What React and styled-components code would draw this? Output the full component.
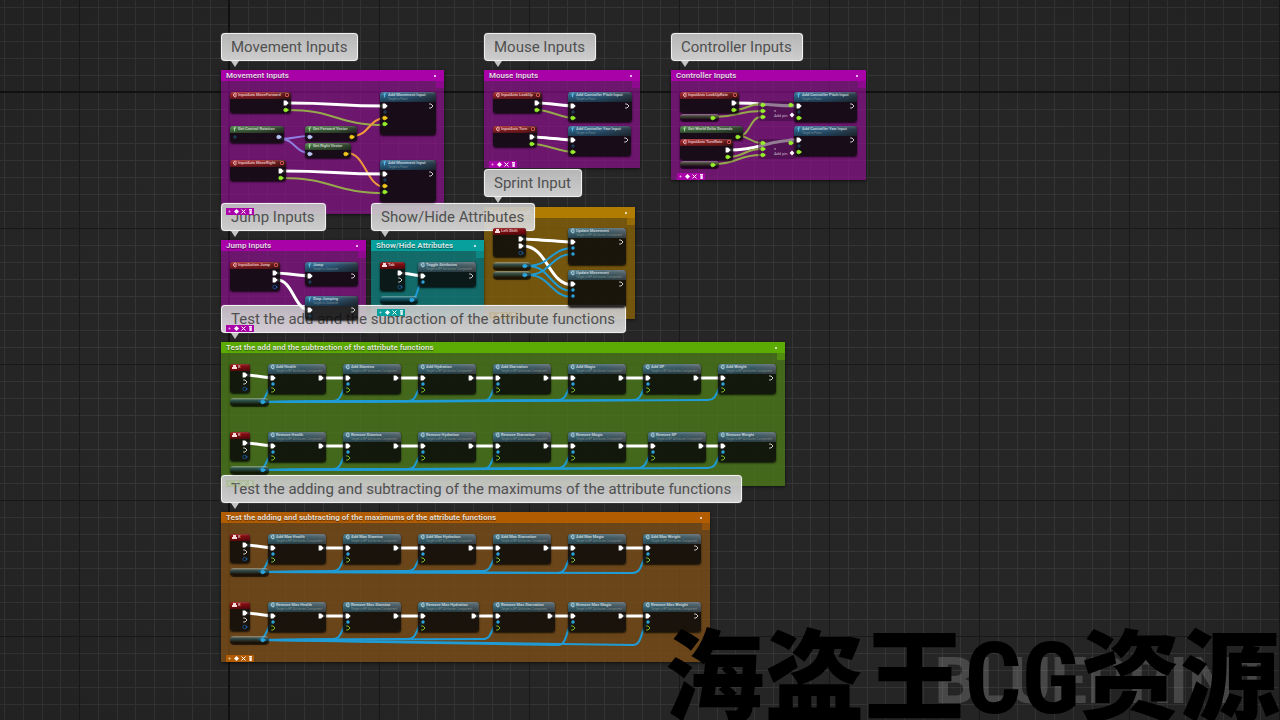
import React from 'react';
import styled, { createGlobalStyle, css } from 'styled-components';

const GlobalStyle = createGlobalStyle`
  *, *::before, *::after {
    box-sizing: border-box;
  }
  body {
    margin: 0;
    background: #232323;
    font-family: Roboto, 'Noto Sans CJK SC', sans-serif;
  }
`;

// eight cells per major grid step, snapped to whole pixels
const gridLines = (size, color) => {
  const stops = [];
  let last = 0;
  for (let i = 1; i < 8; i += 1) {
    const at = Math.round((size * i) / 8);
    stops.push(`transparent ${last}px ${at}px`, `${color} ${at}px ${at + 1}px`);
    last = at + 1;
  }
  return `${stops.join(', ')}, transparent ${last}px`;
};

const Canvas = styled.main`
  position: relative;
  min-height: 100vh;
  overflow: hidden;
  background-color: #262626;
  background-image:
    radial-gradient(ellipse at center, transparent 60%, rgba(0, 0, 0, 0.12) 100%),
    linear-gradient(90deg, #121212 2px, transparent 2px),
    linear-gradient(#121212 2px, transparent 2px),
    linear-gradient(90deg, #191919 1px, transparent 1px),
    linear-gradient(#191919 1px, transparent 1px),
    linear-gradient(90deg, ${gridLines(150, '#353535')}),
    linear-gradient(${gridLines(136, '#353535')});
  background-size: 100% 100%, 3000px 100%, 100% 3000px, 150px 100%, 100% 136px, 150px 100%, 100% 136px;
  background-position: 0 0, 228px 0, 0 91px, 229px 0, 0 92px, 229px 0, 0 92px;
`;

const place = css`
  position: absolute;
  left: ${p => p.$x}px;
  top: ${p => p.$y}px;
  width: ${p => p.$w}px;
  height: ${p => p.$h}px;
`;

const themes = {
  purple: { head: '#a902a9', body: 'rgba(144, 14, 146, 0.66)' },
  teal: { head: '#08a09c', body: 'rgba(12, 128, 126, 0.76)' },
  amber: { head: '#b07d02', body: 'rgba(140, 100, 6, 0.76)' },
  green: { head: '#5cab04', body: 'rgba(76, 124, 24, 0.76)' },
  orange: { head: '#b25c02', body: 'rgba(126, 78, 22, 0.78)' },
};

const CommentBox = styled.section`
  ${place}
  background: ${p => themes[p.$tone].body};
  box-shadow: 0 1px 3px rgba(0, 0, 0, 0.6);
`;

const CommentHead = styled.header`
  display: flex;
  align-items: center;
  justify-content: space-between;
  height: 11px;
  padding: 0 5px;
  background: ${p => themes[p.$tone].head};
`;

const CommentTitle = styled.h2`
  margin: 0;
  color: rgba(255, 255, 255, 0.82);
  font-size: 8px;
  font-weight: 700;
  line-height: 11px;
  white-space: nowrap;
  text-shadow: 0 1px 1px rgba(0, 0, 0, 0.5);
`;

const HeadDot = styled.span`
  width: 2px;
  height: 2px;
  margin-right: 3px;
  background: rgba(255, 255, 255, 0.7);
`;

const CornerTab = styled.div`
  width: 8px;
  height: 7px;
  margin-left: auto;
  background: ${p => themes[p.$tone].head};
  opacity: 0.55;
`;

const Bubble = styled.div`
  position: absolute;
  left: ${p => p.$x}px;
  top: ${p => p.$y}px;
  height: 28px;
  padding: 0 10px 0 9px;
  border: 1px solid rgba(244, 244, 244, 0.92);
  border-radius: 4px;
  background: linear-gradient(rgba(198, 198, 198, 0.9), rgba(224, 224, 224, 0.9));
  box-shadow: 0 0 1px rgba(240, 240, 240, 0.8);
  color: #505050;
  font-size: 15px;
  line-height: 26px;
  white-space: nowrap;

  &::after {
    content: '';
    position: absolute;
    top: 27px;
    left: 9px;
    border: 4px solid transparent;
    border-top: 6px solid #c4c4c4;
    border-bottom: 0;
  }
`;

const headColors = {
  event: 'linear-gradient(90deg, #a0242c, #8e2024 70%, #481a1a)',
  key: 'linear-gradient(90deg, #941010, #7c0c14)',
  func: 'linear-gradient(90deg, #30688e, #2e5a7c 50%, #2a3844)',
  blue: 'linear-gradient(90deg, #42707f, #3e5f6a 60%, #56636a)',
  pure: 'linear-gradient(90deg, #4e7a4b, #42603e 60%, #2e3c2c)',
};

const NodeBox = styled.article`
  ${place}
  overflow: hidden;
  border-radius: 3px;
  background: rgba(10, 10, 10, 0.85);
  box-shadow: 0 1px 2px rgba(0, 0, 0, 0.8);
`;

const NodeHead = styled.div`
  display: flex;
  gap: 1px;
  height: ${p => (p.$tall ? 10 : 7)}px;
  padding: 0 2px;
  background: linear-gradient(rgba(255, 255, 255, 0.18), transparent 30%, rgba(0, 0, 0, 0.4)), ${p => headColors[p.$kind]};
`;

const HeadText = styled.div`
  flex: 1;
  min-width: 0;
  overflow: hidden;
  color: rgba(255, 255, 255, 0.68);
  font-size: 4px;
  font-weight: 700;
  line-height: 6px;
  white-space: nowrap;
`;

const SubText = styled.div`
  color: rgba(190, 200, 190, 0.5);
  font-size: 3px;
  font-weight: 400;
  line-height: 3px;
`;

const Badge = styled.span`
  align-self: flex-start;
  width: 4px;
  height: 4px;
  margin-top: 1px;
  border: 1px solid #d35353;
  border-radius: 1px;
`;

const PinRows = styled.div`
  display: flex;
  justify-content: space-between;
  padding: ${p => (p.$event ? 0 : 1)}px 2px 0;
`;

const PinColumn = styled.div`
  display: grid;
  grid-auto-rows: ${p => (p.$event ? 7 : 6)}px;
  align-items: center;

  svg {
    display: block;
  }
`;

const Pill = styled.div`
  ${place}
  display: flex;
  align-items: center;
  justify-content: flex-end;
  padding-right: 3px;
  border-radius: 4px;
  background: linear-gradient(rgba(255, 255, 255, 0.4), ${p => p.$tint} 30%, rgba(0, 0, 0, 0.75) 80%);
  box-shadow: 0 1px 1px rgba(0, 0, 0, 0.7);
`;

const MathBox = styled.div`
  ${place}
  border-radius: 3px;
  background: rgba(60, 16, 62, 0.55);
`;

const MathText = styled.div`
  position: absolute;
  left: 16px;
  top: 7px;
  color: rgba(255, 255, 255, 0.7);
  font-size: 4px;
  line-height: 5px;
  white-space: nowrap;
`;

const AddPin = styled.svg`
  position: absolute;
  right: 1px;
  top: 11px;
`;

const Layer = styled.svg`
  position: absolute;
  inset: 0;
  width: 100%;
  height: 100%;
  pointer-events: none;
`;

const Tools = styled.div`
  position: absolute;
  left: ${p => p.$x}px;
  top: ${p => p.$y}px;
  display: flex;
  background: ${p => themes[p.$tone].head};
  opacity: ${p => (p.$faint ? 0.15 : 1)};
`;

const ToolButton = styled.button`
  width: 7px;
  height: 7px;
  padding: 0;
  border: 0;
  background: none;

  svg {
    display: block;
  }
`;

const Brand = styled.div`
  position: absolute;
  right: 8px;
  bottom: -2px;
  color: rgba(255, 255, 255, 0.16);
  font-size: 64px;
  font-weight: 700;
  line-height: 80px;
`;

const Overlay = styled.div`
  position: absolute;
  right: 0;
  bottom: -9px;
  display: flex;
  align-items: baseline;
  color: #000;
  font-family: 'Noto Sans CJK SC', sans-serif;
  font-size: 100px;
  font-weight: 900;
  line-height: 100px;
  white-space: nowrap;
`;

const OverlayLatin = styled.span`
  font-family: 'Liberation Sans Narrow', 'Roboto Condensed', 'Noto Sans CJK SC', sans-serif;
  font-weight: 700;
`;

const pinColors = {
  w: '#fff',
  g: '#97ee2c',
  y: '#f2c81c',
  b: '#2ba4dc',
  n: '#1b5a9c',
  d: '#1d3d55',
  l: '#b9c4f4',
};

// first letter is the color, a trailing "o" leaves the pin unfilled
const Pin = ({ type }) => {
  const color = pinColors[type[0]];
  const hollow = type[1] === 'o';
  if (type[0] === 'w' || type === 'go') {
    return (
      <svg width="6" height="6" viewBox="0 0 6 6">
        <path
          d={hollow ? 'M1.2 1H3L5 3L3 5H1.2' : 'M0.6 0.4H3.2L5.7 3L3.2 5.6H0.6Z'}
          fill={hollow ? 'none' : color}
          stroke={hollow ? color : 'none'}
          strokeWidth="0.8"
        />
      </svg>
    );
  }
  if (type === 'b' || type === 'd') {
    return (
      <svg width="6" height="6" viewBox="0 0 6 6">
        <circle cx="3" cy="3" r="1.7" fill={color} />
      </svg>
    );
  }
  return (
    <svg width="6" height="6" viewBox="0 0 6 6">
      <circle cx="2.6" cy="3" r="1.8" fill={hollow ? 'none' : color} stroke={color} strokeWidth="0.8" />
      <path d="M4 1.4L6 3L4 4.6Z" fill={color} />
    </svg>
  );
};

const HeadIcon = ({ kind }) => (
  <svg width="5" height="6" viewBox="0 0 5 6">
    {kind === 'key' && <path d="M1 1h3v2h1v2H0V3h1Z" fill="#f4dada" />}
    {kind === 'event' && <path d="M4.4 1.4A1.9 1.9 0 1 0 4.4 4.6M2.5 3H5" fill="none" stroke="#f4c9c9" strokeWidth="0.9" />}
    {kind === 'blue' && <path d="M4.2 1.4A1.9 1.9 0 1 0 4.4 4.3M2.5 3H4.8" fill="none" stroke="#c7e6f4" strokeWidth="0.9" />}
    {(kind === 'func' || kind === 'pure') && (
      <path d="M3.8 1Q2.6 0.6 2.5 2V5.4M1.4 2.7H3.6" fill="none" stroke={kind === 'pure' ? '#a3e59b' : '#5cc4f4'} strokeWidth="0.9" />
    )}
  </svg>
);

const Node = ({ kind, x, y, w, h, title, sub, ins = [], outs = [] }) => {
  const tall = kind === 'func' || kind === 'blue';
  return (
    <NodeBox $x={x} $y={y} $w={w} $h={h}>
      <NodeHead $kind={kind} $tall={tall}>
        <HeadIcon kind={kind} />
        <HeadText>
          {title}
          {sub && <SubText>{sub}</SubText>}
        </HeadText>
        {kind === 'event' && <Badge />}
      </NodeHead>
      <PinRows $event={!tall}>
        <PinColumn $event={!tall}>{ins.map((t, i) => <Pin key={i} type={t} />)}</PinColumn>
        <PinColumn $event={!tall}>{outs.map((t, i) => <Pin key={i} type={t} />)}</PinColumn>
      </PinRows>
    </NodeBox>
  );
};

const wireColors = { w: '#fff', g: '#96a84c', b: '#1f9cd6', y: '#f09a3c', l: '#8f7fe0' };

const Wire = ({ c = 'w', p, bend = 0.5 }) => {
  const [x1, y1, x2, y2] = p;
  const dx = Math.abs(x2 - x1) * bend;
  return (
    <path
      d={`M${x1} ${y1}C${x1 + dx} ${y1} ${x2 - dx} ${y2} ${x2} ${y2}`}
      fill="none"
      stroke={wireColors[c]}
      strokeWidth={c === 'w' ? 3 : 2}
    />
  );
};

const comments = [
  { tone: 'purple', x: 221, y: 70, w: 223, h: 144, title: 'Movement Inputs' },
  { tone: 'purple', x: 484, y: 70, w: 156, h: 98, title: 'Mouse Inputs' },
  { tone: 'purple', x: 671, y: 70, w: 195, h: 110, title: 'Controller Inputs' },
  { tone: 'amber', x: 484, y: 207, w: 151, h: 112, title: 'Sprint Input' },
  { tone: 'purple', x: 221, y: 240, w: 145, h: 92, title: 'Jump Inputs' },
  { tone: 'teal', x: 371, y: 240, w: 113, h: 77, title: 'Show/Hide Attributes' },
  { tone: 'green', x: 221, y: 342, w: 564, h: 144, title: 'Test the add and the subtraction of the attribute functions' },
  { tone: 'orange', x: 221, y: 512, w: 489, h: 150, title: 'Test the adding and subtracting of the maximums of the attribute functions' },
];

const bubbles = [
  [221, 33, 'Movement Inputs'],
  [484, 33, 'Mouse Inputs'],
  [671, 33, 'Controller Inputs'],
  [484, 169, 'Sprint Input'],
  [221, 203, 'Jump Inputs'],
  [371, 203, 'Show/Hide Attributes'],
  [221, 305, 'Test the add and the subtraction of the attribute functions'],
  [221, 475, 'Test the adding and subtracting of the maximums of the attribute functions'],
];

const toolbars = [
  [226, 208, 'purple'],
  [489, 161, 'purple'],
  [677, 173, 'purple'],
  [226, 325, 'purple'],
  [377, 309, 'teal'],
  [489, 312, 'amber', true],
  [226, 480, 'green', true],
  [226, 655, 'orange'],
];

const toolIcons = {
  Collapse: <circle cx="3.5" cy="3.5" r="1" opacity="0.7" />,
  Move: <path d="M3.5 1L6 3.5L3.5 6L1 3.5Z" />,
  Close: <path d="M1.5 1.5L5.5 5.5M5.5 1.5L1.5 5.5" stroke="#fff" />,
  Delete: <path d="M2 1h3v1.4H2ZM2.4 2.8h2.4V6H2.4Z" opacity="0.9" />,
};

const pawn = 'Target is Pawn';
const character = 'Target is Character';
const attr = 'Target is BP Attributes Component';

const nodes = [
  { kind: 'event', x: 230, y: 92, w: 61, h: 21, title: 'InputAxis MoveForward', outs: ['w', 'g'] },
  { kind: 'func', x: 380, y: 92, w: 56, h: 43, title: 'Add Movement Input', sub: pawn, ins: ['w', 'd', 'y', 'g'], outs: ['wo'] },
  { kind: 'pure', x: 230, y: 126, w: 54, h: 17, title: 'Get Control Rotation', ins: ['d'], outs: ['l'] },
  { kind: 'pure', x: 305, y: 126, w: 52, h: 15, title: 'Get Forward Vector', ins: ['l'], outs: ['y'] },
  { kind: 'pure', x: 305, y: 143, w: 46, h: 15, title: 'Get Right Vector', ins: ['l'], outs: ['y'] },
  { kind: 'event', x: 230, y: 160, w: 56, h: 21, title: 'InputAxis MoveRight', outs: ['w', 'g'] },
  { kind: 'func', x: 380, y: 160, w: 56, h: 42, title: 'Add Movement Input', sub: pawn, ins: ['w', 'd', 'y', 'g'], outs: ['wo'] },

  { kind: 'event', x: 493, y: 92, w: 49, h: 21, title: 'InputAxis LookUp', outs: ['w', 'g'] },
  { kind: 'func', x: 568, y: 92, w: 64, h: 30, title: 'Add Controller Pitch Input', sub: pawn, ins: ['w', 'd', 'g'], outs: ['wo'] },
  { kind: 'event', x: 493, y: 126, w: 44, h: 21, title: 'InputAxis Turn', outs: ['w', 'g'] },
  { kind: 'func', x: 568, y: 126, w: 63, h: 30, title: 'Add Controller Yaw Input', sub: pawn, ins: ['w', 'd', 'g'], outs: ['wo'] },

  { kind: 'event', x: 680, y: 92, w: 59, h: 21, title: 'InputAxis LookUpRate', outs: ['w', 'g'] },
  { kind: 'pure', x: 680, y: 126, w: 63, h: 14, title: 'Get World Delta Seconds', outs: ['g'] },
  { kind: 'event', x: 680, y: 139, w: 53, h: 21, title: 'InputAxis TurnRate', outs: ['w', 'g'] },
  { kind: 'func', x: 794, y: 92, w: 63, h: 30, title: 'Add Controller Pitch Input', sub: pawn, ins: ['w', 'd', 'g'], outs: ['wo'] },
  { kind: 'func', x: 794, y: 126, w: 63, h: 30, title: 'Add Controller Yaw Input', sub: pawn, ins: ['w', 'd', 'g'], outs: ['wo'] },

  { kind: 'event', x: 230, y: 262, w: 50, h: 29, title: 'InputAction Jump', outs: ['w', 'w', 'no'] },
  { kind: 'func', x: 305, y: 262, w: 53, h: 24, title: 'Jump', sub: character, ins: ['w', 'd'], outs: ['wo'] },
  { kind: 'func', x: 305, y: 296, w: 53, h: 24, title: 'Stop Jumping', sub: character, ins: ['w', 'd'], outs: ['wo'] },

  { kind: 'key', x: 380, y: 262, w: 25, h: 29, title: 'Tab', outs: ['w', 'wo', 'no'] },
  { kind: 'blue', x: 418, y: 262, w: 58, h: 25, title: 'Toggle Attributes', sub: attr, ins: ['w', 'b'], outs: ['wo'] },

  { kind: 'key', x: 493, y: 228, w: 33, h: 29, title: 'Left Shift', outs: ['w', 'w', 'no'] },
  { kind: 'blue', x: 568, y: 228, w: 58, h: 37, title: 'Update Movement', sub: attr, ins: ['w', 'b', 'b'], outs: ['wo'] },
  { kind: 'blue', x: 568, y: 270, w: 58, h: 37, title: 'Update Movement', sub: attr, ins: ['w', 'b', 'b'], outs: ['wo'] },
];

const stats = ['Health', 'Stamina', 'Hydration', 'Starvation', 'Magic', 'XP', 'Weight'];
const maxStats = stats.filter(s => s !== 'XP');

const chains = [
  { y: 364, drop: 36, verb: 'Add', names: stats, xs: [268, 343, 418, 493, 568, 643, 718] },
  { y: 432, drop: 36, verb: 'Remove', names: stats, xs: [268, 343, 418, 493, 568, 648, 718] },
  { y: 534, drop: 39, verb: 'Add Max', names: maxStats, xs: [268, 343, 418, 493, 568, 643] },
  { y: 602, drop: 43, verb: 'Remove Max', names: maxStats, xs: [268, 343, 418, 493, 568, 643], wide: { 2: 61, 3: 62 } },
];

const nodeWidth = (chain, i) => (chain.wide && chain.wide[i]) || 58;

const ChainWires = ({ chain }) => (
  <g>
    <Wire p={[246, chain.y + 11, 274, chain.y + 14]} bend={0.1} />
    {chain.xs.slice(1).map((x, i) => (
      <Wire key={x} p={[chain.xs[i] + nodeWidth(chain, i) - 4, chain.y + 14, x + 4, chain.y + 14]} />
    ))}
    {chain.xs.map((x, i) => {
      const low = chain.y + (i > 3 ? chain.drop : 37);
      return (
        <path
          key={x}
          d={`M262 ${chain.y + 38}L${x - 10} ${low}C${x} ${low} ${x - 2} ${chain.y + 24} ${x + 5} ${chain.y + 20}`}
          fill="none"
          stroke={wireColors.b}
          strokeWidth="2"
        />
      );
    })}
  </g>
);

const ChainNodes = ({ chain }) => (
  <>
    <Node kind="key" x={230} y={chain.y} w={20} h={29} title="K" outs={['w', 'wo', 'no']} />
    {chain.names.map((name, i) => (
      <Node
        key={name}
        kind="blue"
        x={chain.xs[i]}
        y={chain.y}
        w={nodeWidth(chain, i)}
        h={30}
        title={`${chain.verb} ${name}`}
        sub={attr}
        ins={['w', 'b', 'go']}
        outs={[i === chain.names.length - 1 ? 'wo' : 'w']}
      />
    ))}
    <Pill $x={230} $y={chain.y + 34} $w={39} $h={8} $tint="rgba(40, 80, 90, 0.8)"><Pin type="bp" /></Pill>
  </>
);

const MathNode = ({ x, y }) => (
  <MathBox $x={x} $y={y} $w={38} $h={20}>
    <PinRows>
      <PinColumn><Pin type="g" /><Pin type="g" /><Pin type="g" /></PinColumn>
      <PinColumn><Pin type="g" /></PinColumn>
    </PinRows>
    <MathText>×<br />Add pin</MathText>
    <AddPin width="6" height="6" viewBox="0 0 6 6">
      <path d="M3 0.6L5.4 3L3 5.4L0.6 3Z" fill="#fff" />
    </AddPin>
  </MathBox>
);

const Wires = () => (
  <Layer aria-hidden="true">
    <Wire p={[289, 103, 385, 106]} />
    <Wire c="g" p={[287, 110, 385, 125]} />
    <Wire c="l" p={[280, 139, 310, 136]} />
    <Wire c="l" p={[280, 139, 310, 153]} />
    <Wire c="y" p={[353, 136, 385, 118]} />
    <Wire c="y" p={[347, 153, 385, 187]} />
    <Wire p={[283, 171, 385, 174]} />
    <Wire c="g" p={[281, 178, 385, 193]} />

    <Wire p={[540, 103, 573, 106]} bend={0.1} />
    <Wire c="g" p={[538, 110, 573, 118]} bend={0.3} />
    <Wire p={[534, 137, 573, 140]} bend={0.1} />
    <Wire c="g" p={[533, 144, 573, 152]} bend={0.3} />

    <Wire p={[735, 103, 799, 106]} />
    <Wire c="g" p={[734, 110, 761, 104]} />
    <Wire c="g" p={[714, 117, 761, 111]} />
    <Wire c="g" p={[739, 136, 761, 117]} />
    <Wire c="g" p={[739, 136, 761, 143]} />
    <Wire p={[729, 150, 799, 140]} />
    <Wire c="g" p={[728, 157, 761, 149]} />
    <Wire c="g" p={[714, 164, 761, 155]} />

    <Wire p={[277, 273, 310, 276]} bend={0.1} />
    <Wire p={[277, 280, 310, 310]} />

    <Wire p={[401, 273, 423, 276]} bend={0.1} />
    <Wire c="b" p={[412, 300, 423, 282]} />

    <Wire p={[523, 239, 573, 242]} bend={0.1} />
    <Wire p={[523, 246, 573, 285]} />
    <Wire c="b" p={[528, 266, 573, 248]} />
    <Wire c="b" p={[528, 275, 573, 254]} />
    <Wire c="b" p={[528, 266, 573, 291]} />
    <Wire c="b" p={[528, 275, 573, 297]} />
    {chains.map(chain => <ChainWires key={chain.y} chain={chain} />)}
  </Layer>
);

export default function App() {
  return (
    <>
      <GlobalStyle />
      <Canvas>
        {comments.map(c => (
          <CommentBox key={c.title} $tone={c.tone} $x={c.x} $y={c.y} $w={c.w} $h={c.h}>
            <CommentHead $tone={c.tone}>
              <CommentTitle>{c.title}</CommentTitle>
              <HeadDot />
            </CommentHead>
            <CornerTab $tone={c.tone} />
          </CommentBox>
        ))}
        {bubbles.map(([x, y, text]) => (
          <Bubble key={text} $x={x} $y={y}>{text}</Bubble>
        ))}
        <Wires />
        {nodes.map(n => <Node key={`${n.x}-${n.y}`} {...n} />)}
        <Pill $x={680} $y={114} $w={39} $h={7} $tint="rgba(60, 90, 40, 0.8)"><Pin type="g" /></Pill>
        <Pill $x={680} $y={161} $w={39} $h={7} $tint="rgba(60, 90, 40, 0.8)"><Pin type="g" /></Pill>
        <Pill $x={380} $y={296} $w={38} $h={8} $tint="rgba(20, 90, 110, 0.8)"><Pin type="bp" /></Pill>
        <Pill $x={493} $y={262} $w={38} $h={8} $tint="rgba(40, 80, 90, 0.8)"><Pin type="bp" /></Pill>
        <Pill $x={493} $y={271} $w={38} $h={8} $tint="rgba(40, 80, 90, 0.8)"><Pin type="bp" /></Pill>
        <MathNode x={758} y={101} />
        <MathNode x={758} y={139} />
        {chains.map(chain => <ChainNodes key={chain.y} chain={chain} />)}
        {toolbars.map(([x, y, tone, faint]) => (
          <Tools key={`${x}-${y}`} $x={x} $y={y} $tone={tone} $faint={faint}>
            {Object.keys(toolIcons).map(name => (
              <ToolButton key={name} type="button" aria-label={name}>
                <svg width="7" height="7" viewBox="0 0 7 7" fill="#fff">{toolIcons[name]}</svg>
              </ToolButton>
            ))}
          </Tools>
        ))}
        <Brand>BLUEPRINT</Brand>
        <Overlay>
          海盗王<OverlayLatin>CG</OverlayLatin>资源
        </Overlay>
      </Canvas>
    </>
  );
}
